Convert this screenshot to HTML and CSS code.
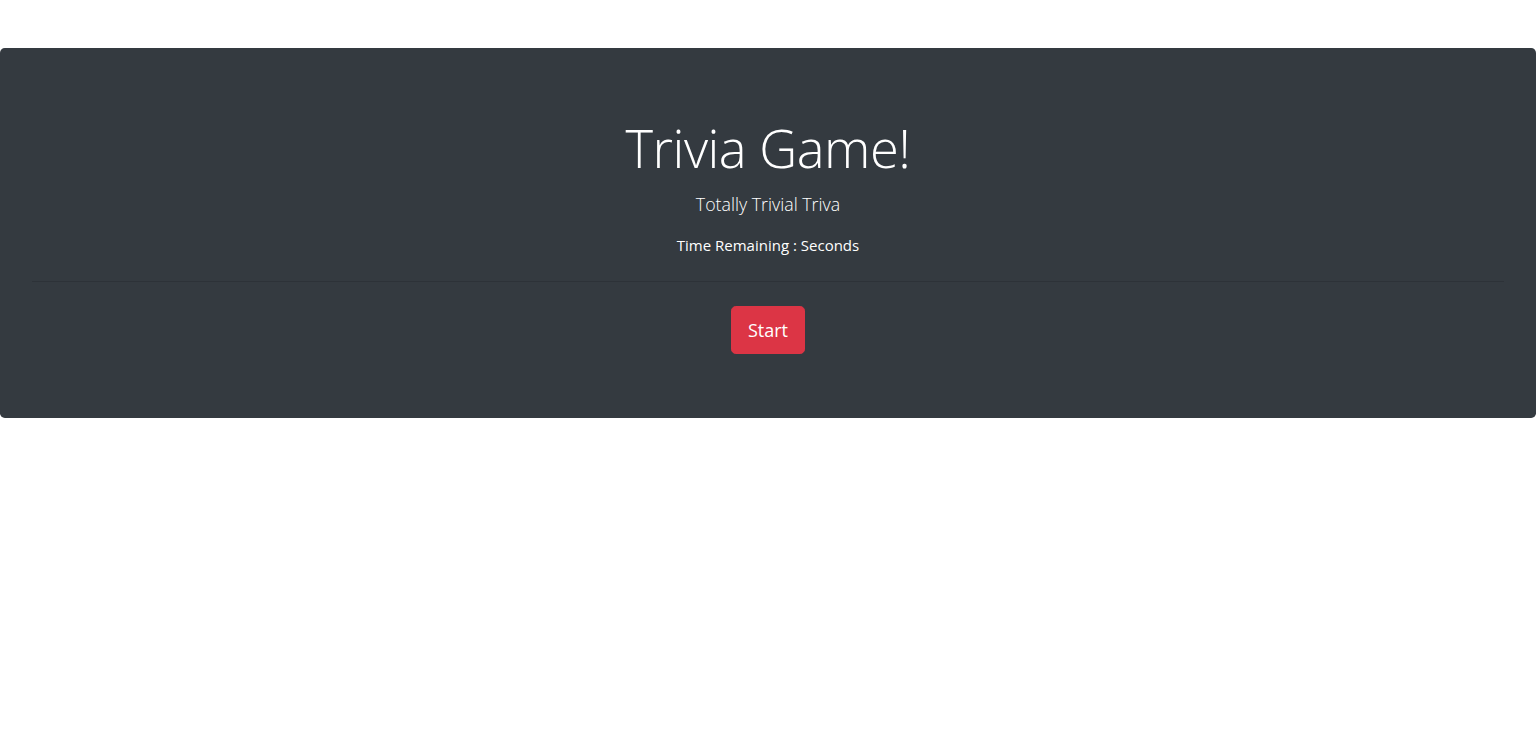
FILE: index.html
```html
<!DOCTYPE html>
<html lang="en">
<head>
<meta charset="utf-8">
<title>Trivia Game</title>
<link rel="stylesheet" href="styles.css">
</head>
<body>
<div class="jumbotron">
  <h1 class="display">Trivia Game!</h1>
  <p class="lead">Totally Trivial Triva</p>
  <p class="timer">Time Remaining : <span id="time"></span>Seconds</p>
  <hr class="divider">
  <div class="actions">
    <button class="btn-start" type="button">Start</button>
  </div>
</div>
</body>
</html>
```

FILE: styles.css
```css
html, body {
  margin: 0;
  padding: 0;
  background: #ffffff;
  font-family: "Open Sans", "Noto Sans", "Liberation Sans", sans-serif;
  color: #212529;
}

.jumbotron {
  margin-top: 48px;
  padding: 64px 32px;
  background: #343a40;
  border-radius: 4.8px;
  color: #ffffff;
  text-align: center;
}

.display {
  margin: 2px 0 8px;
  font-size: 52.5px;
  font-weight: 300;
  line-height: 67px;
  letter-spacing: -0.5px;
}

.lead {
  margin: 0 0 14px;
  font-size: 17.8px;
  font-weight: 300;
  line-height: 30px;
}

.timer {
  margin: 0 0 24px;
  font-size: 15px;
  line-height: 24px;
}

.divider {
  margin: 0 0 24px;
  border: 0;
  border-top: 1px solid rgba(0, 0, 0, 0.12);
  height: 0;
}

.actions {
  display: flex;
  justify-content: center;
}

.btn-start {
  height: 48px;
  padding: 0 16px;
  border: 1px solid #dc3545;
  border-radius: 4.8px;
  background: #dc3545;
  color: #ffffff;
  font-family: inherit;
  font-size: 18px;
  line-height: 30px;
  cursor: pointer;
}
```
